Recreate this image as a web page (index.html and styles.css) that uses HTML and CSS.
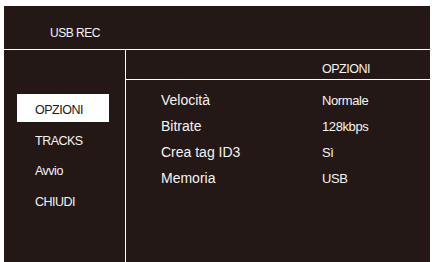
FILE: index.html
```html
<!DOCTYPE html>
<html lang="it">
<head>
<meta charset="utf-8">
<title>USB REC</title>
<link rel="stylesheet" href="styles.css">
</head>
<body>
<div class="screen">
  <div class="header">USB REC</div>
  <div class="main">
    <ul class="menu">
      <li class="item selected">OPZIONI</li>
      <li class="item">TRACKS</li>
      <li class="item">Avvio</li>
      <li class="item">CHIUDI</li>
    </ul>
    <div class="panel">
      <div class="panel-title">OPZIONI</div>
      <div class="rows">
        <div class="row"><span class="label">Velocità</span><span class="value">Normale</span></div>
        <div class="row"><span class="label">Bitrate</span><span class="value">128kbps</span></div>
        <div class="row"><span class="label">Crea tag ID3</span><span class="value">Sì</span></div>
        <div class="row"><span class="label">Memoria</span><span class="value">USB</span></div>
      </div>
    </div>
  </div>
</div>
</body>
</html>
```

FILE: styles.css
```css
html, body {
  margin: 0;
  padding: 0;
  background: #ffffff;
}
body {
  font-family: "Liberation Sans", Arial, sans-serif;
  color: #f4f4f4;
}
.screen {
  margin: 6px 0 0 4px;
  width: 426px;
  height: 256px;
  background: #231815;
  display: flex;
  flex-direction: column;
}
.header {
  box-sizing: border-box;
  height: 44px;
  padding: 19px 0 0 46px;
  font-size: 12px;
  line-height: 17px;
  letter-spacing: -0.5px;
  border-bottom: 1px solid #ffffff;
}
.main {
  flex: 1;
  display: flex;
}
.menu {
  list-style: none;
  margin: 0;
  padding: 44px 0 0 13px;
  width: 108px;
  border-right: 1px solid #ffffff;
  display: flex;
  flex-direction: column;
  gap: 2.5px;
}
.item {
  box-sizing: border-box;
  width: 92px;
  height: 28px;
  padding: 4px 0 0 18px;
  font-size: 12.5px;
  line-height: 24px;
  letter-spacing: -0.5px;
}
.item.selected {
  background: #ffffff;
  color: #231815;
}
.panel {
  flex: 1;
  display: flex;
  flex-direction: column;
}
.panel-title {
  box-sizing: border-box;
  height: 30px;
  padding: 10px 0 0 196px;
  font-size: 12.5px;
  line-height: 19px;
  letter-spacing: -0.5px;
  border-bottom: 1px solid #ffffff;
}
.rows {
  padding: 7px 0 0 35px;
}
.row {
  display: flex;
  align-items: baseline;
  height: 26px;
  line-height: 26px;
}
.label {
  width: 161px;
  font-size: 14px;
}
.value {
  font-size: 13px;
  letter-spacing: -0.4px;
}
```
